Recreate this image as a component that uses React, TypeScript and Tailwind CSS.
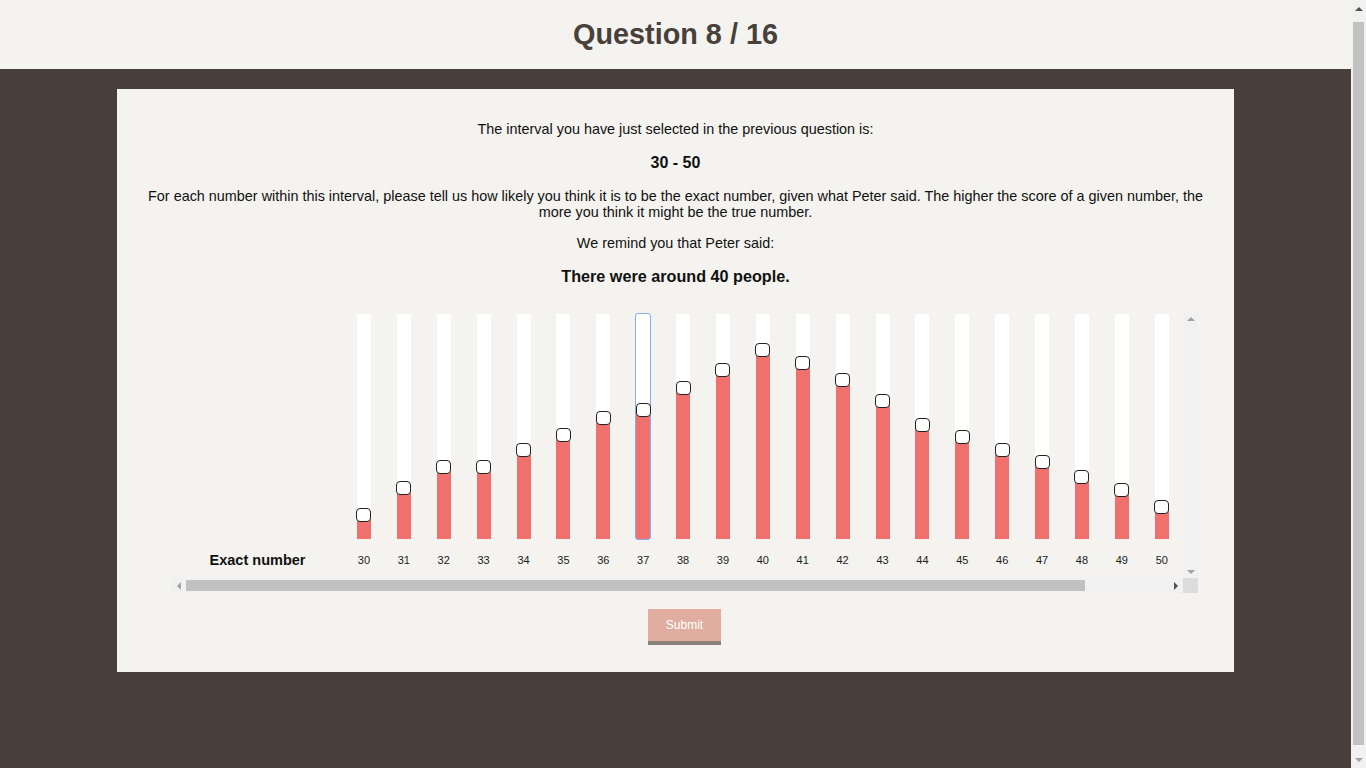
import React from 'react'

const values: [number, number][] = [
  [30, 515], [31, 488], [32, 467], [33, 467], [34, 450], [35, 435], [36, 418],
  [37, 410], [38, 388], [39, 370], [40, 350], [41, 363], [42, 380], [43, 401],
  [44, 425], [45, 437], [46, 450], [47, 462], [48, 477], [49, 490], [50, 507],
]

const BAR_TOP = 314
const BAR_H = 225

function Triangle({ dir, color }: { dir: 'up' | 'down' | 'left' | 'right'; color: string }) {
  const pts = {
    up: '0,4 4,0 8,4',
    down: '0,0 8,0 4,4',
    left: '4,0 4,8 0,4',
    right: '0,0 0,8 4,4',
  }[dir]
  const w = dir === 'up' || dir === 'down' ? 8 : 4
  const h = dir === 'up' || dir === 'down' ? 4 : 8
  return (
    <svg width={w} height={h} viewBox={`0 0 ${w} ${h}`}>
      <polygon points={pts} fill={color} />
    </svg>
  )
}

function Slider({ n, y, focused }: { n: number; y: number; focused?: boolean }) {
  const fill = BAR_TOP + BAR_H - y
  return (
    <div className="w-[39.9px] shrink-0 flex flex-col items-center">
      <div
        className={
          'relative mt-[1px] w-[14px] h-[225px] bg-white flex flex-col justify-end ' +
          (focused ? 'outline outline-1 outline-[#86aef5] rounded-[2px]' : '')
        }
      >
        <div className="w-full bg-[#f0706e]" style={{ height: fill }} />
        <div
          className="absolute -left-[0.5px] w-[15px] h-[14px] bg-white border border-[#222] rounded-[4px]"
          style={{ top: y - BAR_TOP - 7 }}
        />
      </div>
      <div className="mt-[15px] text-[11px] leading-[13px] text-[#1b1b1b]">{n}</div>
    </div>
  )
}

export default function App() {
  return (
    <div className="flex h-screen w-full overflow-hidden bg-[#483f3a]" style={{ fontFamily: '"Liberation Sans", Arial, sans-serif' }}>
      <div className="flex-1 flex flex-col">
        <header className="h-[69px] bg-[#f4f3ef] flex items-center justify-center">
          <h1 className="text-[28.8px] font-bold text-[#47403b] leading-none -mt-[1px]">Question 8 / 16</h1>
        </header>

        <main className="mx-[117px] mt-[20px] bg-[#f4f3ef] px-[30px] pt-[32px] pb-[27px] text-center text-[#111]">
          <p className="text-[14.4px] leading-[16px]">The interval you have just selected in the previous question is:</p>
          <p className="mt-[17px] text-[16px] leading-[18px] font-bold">30 - 50</p>
          <p className="mt-[16px] text-[14.4px] leading-[16px]">
            For each number within this interval, please tell us how likely you think it is to be the exact number, given what Peter said. The higher the score of a given number, the more you think it might be the true number.
          </p>
          <p className="mt-[15px] text-[14.4px] leading-[16px]">We remind you that Peter said:</p>
          <p className="mt-[15px] text-[16.2px] leading-[20px] font-bold">There were around 40 people.</p>

          {/* chart scroll area */}
          <div className="mt-[27px] ml-[24px] w-[1027px] h-[280px] flex flex-col">
            <div className="flex h-[265px]">
              <div className="flex-1 flex overflow-hidden">
                <div className="w-[173px] shrink-0 flex flex-col justify-end pb-[9px]">
                  <span className="text-[14.5px] font-bold text-[#111] leading-[18px]">Exact number</span>
                </div>
                {values.map(([n, y]) => (
                  <Slider key={n} n={n} y={y} focused={n === 37} />
                ))}
              </div>
              <div className="w-[15px] bg-[#f1f1f1] flex flex-col items-center justify-between py-[4px]">
                <Triangle dir="up" color="#a3a3a3" />
                <Triangle dir="down" color="#a3a3a3" />
              </div>
            </div>
            <div className="flex h-[15px]">
              <div className="flex-1 bg-[#f1f1f1] flex items-center">
                <div className="w-[15px] flex justify-center">
                  <Triangle dir="left" color="#a3a3a3" />
                </div>
                <div className="h-[11px] w-[899px] bg-[#c1c1c1]" />
                <div className="flex-1" />
                <div className="w-[15px] flex justify-center">
                  <Triangle dir="right" color="#505050" />
                </div>
              </div>
              <div className="w-[15px] bg-[#dcdcdc]" />
            </div>
          </div>

          <div className="mt-[16px] flex justify-center pl-[18px]">
            <button className="w-[73px] h-[36px] bg-[#e0ada0] border-b-4 border-[#8b817d] text-white text-[12px]">
              Submit
            </button>
          </div>
        </main>
      </div>

      {/* page scrollbar */}
      <div className="w-[15px] bg-[#f1f1f1] flex flex-col items-center">
        <div className="h-[17px] flex items-center">
          <Triangle dir="up" color="#505050" />
        </div>
        <div className="w-[11px] flex-1 bg-[#c1c1c1] mt-[5px] mb-[6px]" />
        <div className="h-[17px] flex items-center">
          <Triangle dir="down" color="#a3a3a3" />
        </div>
      </div>
    </div>
  )
}
